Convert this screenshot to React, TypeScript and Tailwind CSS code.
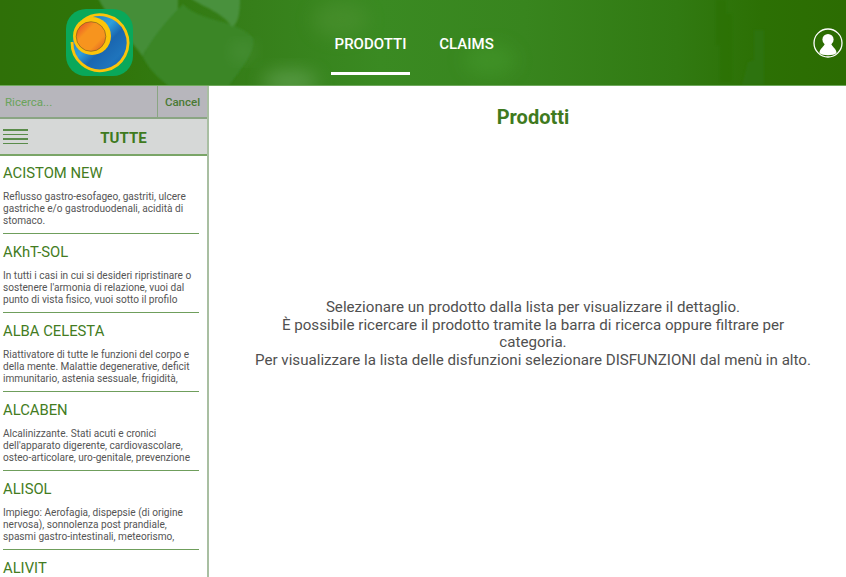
import React from 'react';

const prodotti = [
  {
    name: 'ACISTOM NEW',
    lines: ['Reflusso gastro-esofageo, gastriti, ulcere', 'gastriche e/o gastroduodenali, acidità di', 'stomaco.'],
  },
  {
    name: 'AKhT-SOL',
    lines: ['In tutti i casi in cui si desideri ripristinare o', "sostenere l'armonia di relazione, vuoi dal", 'punto di vista fisico, vuoi sotto il profilo'],
  },
  {
    name: 'ALBA CELESTA',
    lines: ['Riattivatore di tutte le funzioni del corpo e', 'della mente. Malattie degenerative, deficit', 'immunitario, astenia sessuale, frigidità,'],
  },
  {
    name: 'ALCABEN',
    lines: ['Alcalinizzante. Stati acuti e cronici', "dell'apparato digerente, cardiovascolare,", 'osteo-articolare, uro-genitale, prevenzione'],
  },
  {
    name: 'ALISOL',
    lines: ['Impiego: Aerofagia, dispepsie (di origine', 'nervosa), sonnolenza post prandiale,', 'spasmi gastro-intestinali, meteorismo,'],
  },
  {
    name: 'ALIVIT',
    lines: [],
  },
];

const HeaderArt = () => (
  <svg className="absolute inset-0 h-full w-full" viewBox="0 0 846 85" preserveAspectRatio="none">
    <defs>
      <linearGradient id="hdr" x1="0" y1="0" x2="1" y2="0">
        <stop offset="0" stopColor="#2f7008" />
        <stop offset="0.11" stopColor="#2f7408" />
        <stop offset="0.3" stopColor="#367f1a" />
        <stop offset="0.45" stopColor="#3a8a22" />
        <stop offset="0.62" stopColor="#38851e" />
        <stop offset="0.8" stopColor="#317a12" />
        <stop offset="0.9" stopColor="#2c7004" />
        <stop offset="1" stopColor="#2c6c02" />
      </linearGradient>
      <filter id="soft" x="-20%" y="-20%" width="140%" height="140%">
        <feGaussianBlur stdDeviation="0.8" />
      </filter>
      <filter id="glow" x="-50%" y="-50%" width="200%" height="200%">
        <feGaussianBlur stdDeviation="9" />
      </filter>
    </defs>
    <rect width="846" height="85" fill="url(#hdr)" />
    <g filter="url(#soft)">
      <path d="M98 -2 C112 25 130 38 143 57 C146 42 172 32 178 13 L178 -2 Z" fill="#458e38" />
      <path d="M143 57 C150 40 165 22 183 4 C200 22 238 20 253 38 C256 52 240 70 228 87 L170 87 C158 78 148 68 143 57 Z" fill="#3a8628" />
      <path d="M190 -2 C205 8 222 12 232 27 C238 24 240 14 240 -2 Z" fill="#4a913e" />
    </g>
    <ellipse cx="243" cy="52" rx="10" ry="8" fill="#5d9f50" opacity="0.5" filter="url(#glow)" />
    <ellipse cx="290" cy="82" rx="28" ry="12" fill="#6aa85c" opacity="0.6" filter="url(#glow)" />
    <ellipse cx="340" cy="20" rx="28" ry="18" fill="#5a9a3c" opacity="0.35" filter="url(#glow)" />
    <ellipse cx="490" cy="60" rx="26" ry="16" fill="#4aa030" opacity="0.4" filter="url(#glow)" />
    <path d="M716 0 L726 0 L726 14 L732 14 L732 82 L720 82 L720 45 L716 45 Z" fill="#2c7004" opacity="0.45" filter="url(#soft)" />
    <path d="M754 30 L764 30 L764 85 L742 85 L748 62 L754 60 Z" fill="#2f7414" opacity="0.6" filter="url(#soft)" />
  </svg>
);

const Logo = () => (
  <svg width="68" height="68" viewBox="0 0 68 68">
    <defs>
      <linearGradient id="blu" x1="0" y1="0" x2="1" y2="1">
        <stop offset="0" stopColor="#1b69b4" />
        <stop offset="0.42" stopColor="#2f9fdc" />
        <stop offset="0.58" stopColor="#1a66b0" />
        <stop offset="0.78" stopColor="#1f74bc" />
        <stop offset="1" stopColor="#1458a4" />
      </linearGradient>
      <linearGradient id="ora" x1="0" y1="0" x2="1" y2="1">
        <stop offset="0" stopColor="#e63c2c" />
        <stop offset="0.35" stopColor="#f7941e" />
        <stop offset="0.7" stopColor="#f7941e" />
        <stop offset="1" stopColor="#d9502a" />
      </linearGradient>
    </defs>
    <rect x="0" y="0" width="67" height="67" rx="20" fill="#0aa85a" />
    <circle cx="34" cy="33.7" r="27.5" fill="url(#blu)" />
    <path d="M17 11.5 A28 28 0 1 1 6 33" fill="none" stroke="#fcc40a" strokeWidth="2.8" />
    <circle cx="26" cy="27" r="19" fill="#fcc40a" />
    <circle cx="25" cy="27.5" r="14.8" fill="url(#ora)" stroke="#6b5a20" strokeWidth="0.6" />
  </svg>
);

const UserIcon = () => (
  <svg width="30" height="30" viewBox="0 0 30 30">
    <circle cx="15" cy="15" r="14" fill="none" stroke="#ffffff" strokeWidth="1.3" />
    <circle cx="15" cy="11.5" r="5.6" fill="#ffffff" />
    <path d="M12 15 C11.5 19 6.5 20 6.5 25 C9 28 21 28 23.5 25 C23.5 20 18.5 19 18 15 Z" fill="#ffffff" />
  </svg>
);

export default function App() {
  return (
    <div className="flex h-[577px] w-[846px] flex-col overflow-hidden bg-white font-['Roboto',sans-serif]">
      <header className="relative flex h-[86px] shrink-0 items-stretch border-b border-[#6fa85c]">
        <HeaderArt />
        <div className="relative ml-[66px] mt-[9px]">
          <Logo />
        </div>
        <nav className="relative ml-[197px] flex gap-[24px]">
          <div className="flex h-[75px] w-[79px] items-center justify-center border-b-[3px] border-white pt-[13px] text-[15px] font-medium text-white">
            <span className="relative top-[2px]">PRODOTTI</span>
          </div>
          <div className="flex h-[75px] w-[65px] items-center justify-center pt-[13px] text-[15px] font-medium text-white">
            CLAIMS
          </div>
        </nav>
        <div className="relative ml-auto mr-[3px] mt-[28px]">
          <UserIcon />
        </div>
      </header>

      <div className="flex min-h-0 flex-1">
        <aside className="w-[209px] shrink-0 overflow-hidden border-r-2 border-[#a9bfa2]">
          <div className="flex h-[33px] border-b-2 border-[#8aa583] bg-[#b7b6bc]">
            <div className="flex flex-1 items-center border-r border-[#8aa583] pl-[5px] pt-[2px] text-[11.5px] text-[#6aa35a]">
              Ricerca...
            </div>
            <div className="flex w-[49px] items-center justify-center pt-[2px] text-[11.5px] font-medium text-[#4a7a34]">
              Cancel
            </div>
          </div>
          <div className="relative flex h-[37px] items-center justify-center border-b-2 border-[#7aa567] bg-[#d6d8d7] pl-[40px] pt-[3px] text-[15px] font-bold text-[#3f7a1e]">
            <div className="absolute left-[3px] top-[10px] flex w-[25px] flex-col gap-[3px]">
              <span className="h-[1.5px] bg-[#5a8c4a]" />
              <span className="h-[1.5px] bg-[#5a8c4a]" />
              <span className="h-[1.5px] bg-[#5a8c4a]" />
              <span className="h-[1.5px] bg-[#5a8c4a]" />
            </div>
            TUTTE
          </div>
          <ul className="-mt-[1px] pl-[3px]">
            {prodotti.map((p) => (
              <li key={p.name} className="mr-[8px] h-[79px] border-b border-[#6f9e5c] pt-[8px] last:border-b-0">
                <div className="text-[14.8px] leading-[20px] text-[#437c22]">{p.name}</div>
                <div className="mt-[8px] text-[10.1px] leading-[12px] text-[#555555]">
                  {p.lines.map((l) => (
                    <div key={l} className="whitespace-nowrap">{l}</div>
                  ))}
                </div>
              </li>
            ))}
          </ul>
        </aside>

        <main className="flex-1 pl-[44px] pr-[33px] pt-[18px] text-center">
          <h1 className="text-[20px] font-bold leading-[26px] text-[#3f7a1e]">Prodotti</h1>
          <div className="mt-[169px] text-[15.13px] leading-[17.5px] text-[#505050]">
            <p>Selezionare un prodotto dalla lista per visualizzare il dettaglio.</p>
            <p>È possibile ricercare il prodotto tramite la barra di ricerca oppure filtrare per categoria.</p>
            <p className="whitespace-nowrap">Per visualizzare la lista delle disfunzioni selezionare DISFUNZIONI dal menù in alto.</p>
          </div>
        </main>
      </div>
    </div>
  );
}
